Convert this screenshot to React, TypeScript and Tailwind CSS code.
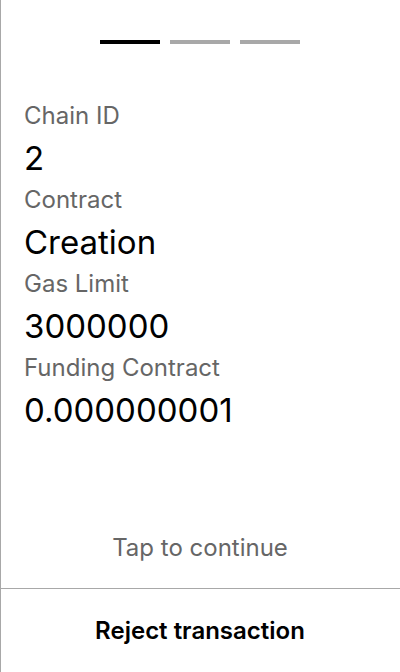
import React from "react";

const fields = [
  { label: "Chain ID", value: "2" },
  { label: "Contract", value: "Creation" },
  { label: "Gas Limit", value: "3000000" },
  { label: "Funding Contract", value: "0.000000001" },
];

export default function App() {
  return (
    <div
      className="flex h-[672px] w-[400px] flex-col border-l border-[#a8a8a8] bg-white"
      style={{ fontFamily: "Inter, 'Noto Sans', sans-serif" }}
    >
      {/* step indicator */}
      <div className="flex justify-center gap-[10px] pr-px pt-[40px]">
        <div className="h-[4px] w-[60px] bg-black" />
        <div className="h-[4px] w-[60px] bg-[#a8a8a8]" />
        <div className="h-[4px] w-[60px] bg-[#a8a8a8]" />
      </div>

      <div className="flex flex-1 flex-col px-[23px] pt-[54px]">
        {fields.map((f) => (
          <div key={f.label} className="flex flex-col">
            <span className="text-[24px] leading-[36px] text-[#666666]">{f.label}</span>
            <span className="text-[33px] leading-[48px] text-black">{f.value}</span>
          </div>
        ))}
      </div>

      <div className="pb-[26px] pr-px text-center text-[24px] leading-[28px] text-[#666666]">
        Tap to continue
      </div>

      <div className="border-t border-[#a8a8a8]" />

      <button className="flex h-[83px] items-center justify-center pr-px text-[24px] font-semibold text-black">
        Reject transaction
      </button>
    </div>
  );
}
